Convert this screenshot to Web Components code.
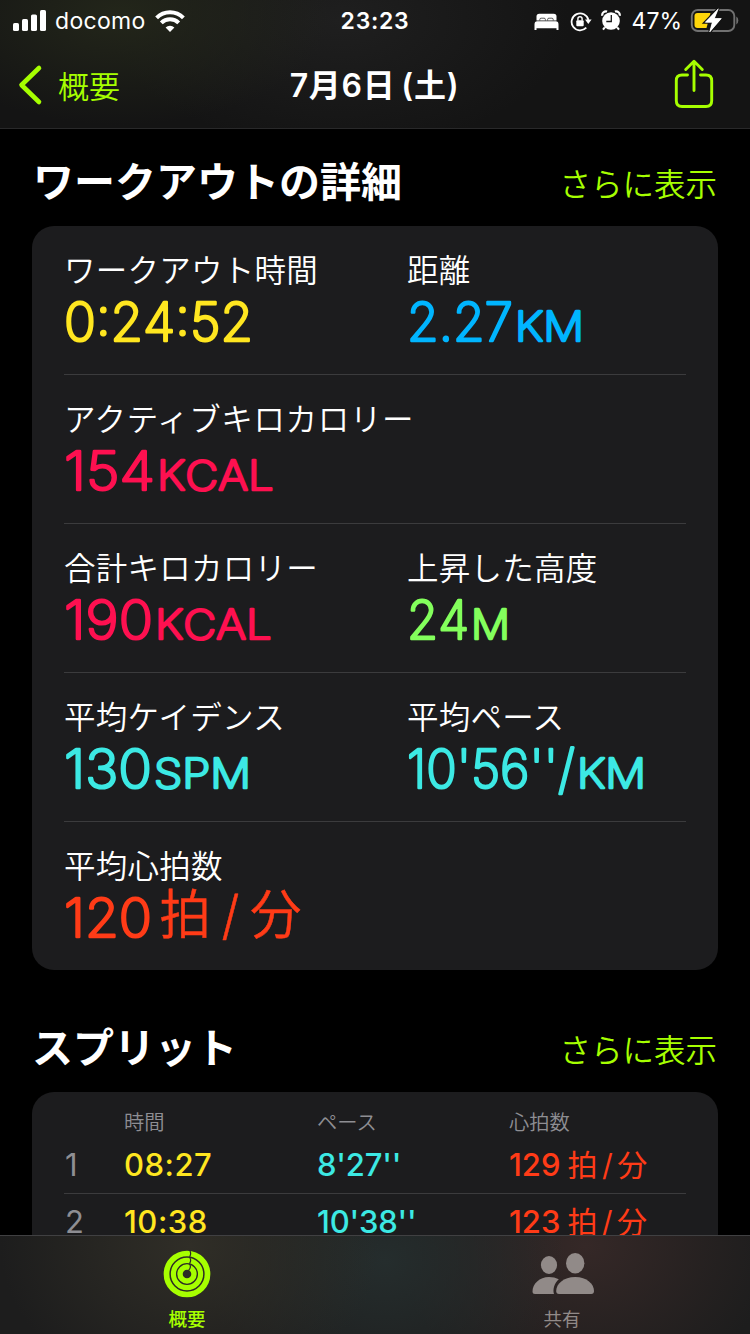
<!DOCTYPE html>
<html lang="ja">
<head>
<meta charset="UTF-8">
<title>7月6日(土)</title>
<style>
  html, body {
    margin: 0;
    background: #000;
  }
  body {
    width: 750px;
    height: 1334px;
    overflow: hidden;
    --accent: #a6ff00;
    --cjk: "Noto Sans CJK JP";
    color: #fff;
    font-family: Inter, "Noto Sans CJK JP", sans-serif;
    font-kerning: none;
  }
</style>
</head>
<body>
<workout-app>
  <status-bar slot="top" carrier="docomo" time="23:23" battery="47%"></status-bar>
  <nav-bar slot="top" back="概要"><span>7月6日</span><span style="margin-left:6px">(土)</span></nav-bar>

  <section-header more="さらに表示">ワークアウトの詳細</section-header>
  <detail-card>
    <metric-row>
      <metric-item label="ワークアウト時間" value="0:24:52" width="189" color="#ffe620"></metric-item>
      <metric-item label="距離" value="2.27" width="106" unit="KM" unit-width="69" color="#00b5ff"></metric-item>
    </metric-row>
    <metric-row>
      <metric-item label="アクティブキロカロリー" label-spacing="0.65" value="154" width="91" unit="KCAL" unit-width="116.5" color="#fe1050"></metric-item>
    </metric-row>
    <metric-row>
      <metric-item label="合計キロカロリー" value="190" width="89" unit="KCAL" unit-width="116.5" color="#fe1050"></metric-item>
      <metric-item label="上昇した高度" value="24" width="62" unit="M" unit-width="39" color="#83ff5c"></metric-item>
    </metric-row>
    <metric-row>
      <metric-item label="平均ケイデンス" value="130" width="88" unit="SPM" unit-width="97" color="#3ce9e4"></metric-item>
      <metric-item label="平均ペース" value="10'56''/" width="168" unit="KM" unit-width="69" color="#3ce9e4"></metric-item>
    </metric-row>
    <metric-row>
      <metric-item label="平均心拍数" value="120" width="88" suffix="拍 / 分" suffix-width="142" color="#ff3b17"></metric-item>
    </metric-row>
  </detail-card>

  <section-header class="second" more="さらに表示">スプリット</section-header>
  <splits-card>
    <split-row index="1" time="08:27" pace="8'27''" rate="129"></split-row>
    <split-row index="2" time="10:38" pace="10'38''" rate="123"></split-row>
  </splits-card>

  <tab-bar slot="bottom">
    <tab-item active label="概要">
      <svg width="48" height="48" viewBox="-24 -24 48 48" fill="none">
        <g stroke="#a6ff00">
          <circle r="20.5" stroke-width="5.7"/>
          <circle r="13.6" stroke-width="5.1"/>
          <circle r="7" stroke-width="5.4"/>
        </g>
        <g stroke="#2b2a26" stroke-width="1.2">
          <path d="M2.4-24q2.400 3.200.2 6.800"/>
          <path d="M2.400-17q2.400 3.200.2 6.400"/>
          <path d="M2.400-10.300q2.400 3.400-.8 6.600"/>
        </g>
      </svg>
    </tab-item>
    <tab-item label="共有">
      <svg width="64" height="48" viewBox="-1 0 64 48" fill="#918a88">
        <ellipse cx="18" cy="15" rx="8.1" ry="9"/>
        <ellipse cx="44.2" cy="13.2" rx="9.2" ry="10.2"/>
        <path d="M4 44q-2.500 0-2.500-2.500C1.500 34 8.500 27 18 27q5.500 0 9.800 2.200C23.500 33 21.500 39 23 44z"/>
        <path d="M28 44q-2.800 0-2.800-3C25.200 34 32.500 27 44.200 27S63 34 63 41q0 3-2.800 3z"/>
      </svg>
    </tab-item>
  </tab-bar>
</workout-app>

<script>
class WorkoutApp extends HTMLElement {
  constructor() {
    super();
    this.attachShadow({ mode: 'open' });
  }

  connectedCallback() {
    this.shadowRoot.innerHTML = `
      <style>
        :host {
          display: flex;
          flex-direction: column;
          height: 1334px;
        }
        header {
          box-sizing: border-box;
          height: 129px;
          flex: none;
          border-bottom: 1px solid #29292a;
          background:
            radial-gradient(ellipse 210px 110px at 120px 15px, #23261a, rgba(35, 38, 26, 0)),
            radial-gradient(ellipse 230px 130px at 340px 20px, #1f1f1f, rgba(31, 31, 31, 0)),
            #141414;
        }
        main {
          flex: 1;
          min-height: 0;
          overflow: hidden;
          padding: 0 32px;
        }
      </style>
      <header><slot name="top"></slot></header>
      <main><slot></slot></main>
      <slot name="bottom"></slot>
    `;
  }
}
customElements.define('workout-app', WorkoutApp);

class StatusBar extends HTMLElement {
  constructor() {
    super();
    this.attachShadow({ mode: 'open' });
  }

  connectedCallback() {
    this.shadowRoot.innerHTML = `
      <style>
        :host {
          display: grid;
          grid-template-columns: 1fr auto 1fr;
          align-items: center;
          height: 40px;
          padding: 0 11px 0 13px;
          font-size: 23px;
          line-height: 42px;
        }
        div {
          display: flex;
          align-items: center;
        }
        .right {
          justify-content: flex-end;
        }
        .carrier {
          margin: 0 9px 0 8px;
          letter-spacing: 0.3px;
        }
        .time {
          margin-left: -2px;
          font-weight: 600;
          letter-spacing: 0.7px;
        }
        .level {
          margin: 0 8px 0 11px;
        }
        svg {
          display: block;
        }
      </style>
      <div>
        <svg width="34" height="40" fill="#fff">
          <rect x="0" y="22" width="6" height="8" rx="1.6"/>
          <rect x="9" y="18" width="6" height="12" rx="1.6"/>
          <rect x="18" y="13.500" width="6" height="16.500" rx="1.6"/>
          <rect x="27" y="9" width="6" height="21" rx="1.6"/>
        </svg>
        <span class="carrier">${this.getAttribute('carrier')}</span>
        <svg width="30" height="40" fill="none" stroke="#fff" stroke-width="4">
          <path d="M1.600 16.800a19 19 0 0 1 26.800 0"/>
          <path d="M6.300 21.800a12.300 12.300 0 0 1 17.400 0"/>
          <path d="M15 31l-4.400-4.400a6.300 6.300 0 0 1 8.800 0z" fill="#fff" stroke="none"/>
        </svg>
      </div>
      <span class="time">${this.getAttribute('time')}</span>
      <div class="right">
        <svg width="25" height="40" fill="#fff">
          <path d="M2.500 19.500V15.600q0-2.800 2.800-2.800h14.400q2.800 0 2.800 2.800v3.900z"/>
          <path d="M5.800 19.500v-1q0-1.300 1.300-1.300h3q1.300 0 1.300 1.300v1M13.600 19.500v-1q0-1.300 1.300-1.300h3q1.300 0 1.300 1.300v1" fill="none" stroke="#151515" stroke-width="0.700"/>
          <path d="M.500 29v-5.500q0-3.300 2.700-3.300h18.600q2.700 0 2.700 3.300V29h-2v-1.700h-20V29z"/>
        </svg>
        <svg width="22" height="40" style="margin-left:11px" fill="none" stroke="#fff">
          <path d="M16.300 26.700A8.500 8.500 0 1 1 18.400 19" stroke-width="1.800"/>
          <path d="M15 18.600h6.600l-3.300 4.400z" fill="#fff" stroke="none"/>
          <rect x="6.300" y="19.300" width="7.400" height="6" rx="1" fill="#fff" stroke="none"/>
          <path d="M7.900 19.500v-1.700a2.100 2.100 0 0 1 4.200 0v1.700" stroke-width="1.400"/>
        </svg>
        <svg width="20" height="40" style="margin-left:9px">
          <circle cx="10" cy="20" r="8.800" fill="#fff"/>
          <path d="M1.300 14.700a3.700 3.700 0 0 1 4.800-4.200M18.700 14.700a3.700 3.700 0 0 0-4.800-4.200" stroke="#fff" stroke-width="2.200" fill="none"/>
          <path d="M3.800 26.300l-1.800 2.400M16.200 26.300l1.800 2.400" stroke="#fff" stroke-width="2"/>
          <path d="M10.300 14v6.500H5.300" stroke="#161616" stroke-width="1.300" fill="none"/>
        </svg>
        <span class="level">${this.getAttribute('battery')}</span>
        <svg width="49" height="40">
          <rect x="1.800" y="9" width="42.500" height="21" rx="6" fill="none" stroke="#717171" stroke-width="1.900"/>
          <path d="M46.300 15.500q2 1.200 2 4t-2 4z" fill="#717171"/>
          <path d="M7.500 12h13l-4 15h-9q-3 0-3-3v-9q0-3 3-3z" fill="#ffd60a"/>
          <path d="M28.300 7.800L15.300 21.300h7L19.700 31 31.300 17.500h-7z" fill="#fff" stroke="#141414" stroke-width="3" paint-order="stroke"/>
          <path d="M28.300 7.800L15.300 21.300h7L19.700 31 31.300 17.500h-7z" fill="#fff" stroke="#fff" stroke-width="0.600"/>
        </svg>
      </div>
    `;
  }
}
customElements.define('status-bar', StatusBar);

class NavBar extends HTMLElement {
  constructor() {
    super();
    this.attachShadow({ mode: 'open' });
  }

  connectedCallback() {
    this.shadowRoot.innerHTML = `
      <style>
        :host {
          display: grid;
          grid-template-columns: 1fr auto 1fr;
          align-items: center;
          height: 86px;
          padding: 0 36px;
        }
        .back {
          display: flex;
          align-items: center;
          gap: 15px;
          margin-left: -18px;
          color: var(--accent);
          font: 350 31px/84px var(--cjk), sans-serif;
        }
        .back span {
          padding-bottom: 1px;
        }
        .title {
          margin-left: -1px;
          padding-top: 2px;
          font-size: 32px;
          font-weight: 600;
          line-height: 88px;
          letter-spacing: 0.7px;
        }
        .share {
          justify-self: end;
        }
        svg {
          display: block;
          fill: none;
          stroke: var(--accent);
          stroke-linecap: round;
          stroke-linejoin: round;
        }
      </style>
      <div class="back">
        <svg width="25" height="42" stroke-width="4.600"><path d="M21 4L3.500 21 21 38"/></svg>
        <span>${this.getAttribute('back')}</span>
      </div>
      <div class="title"><slot></slot></div>
      <svg class="share" width="40" height="52" stroke-width="2.900">
        <path d="M13.500 16H8Q2.300 16 2.300 21.700v20.100q0 5.700 5.700 5.700h24q5.700 0 5.700-5.700V21.700q0-5.700-5.700-5.700H26.500"/>
        <path d="M20 31.500V3M11.700 10.500L20 2.300l8.300 8.200"/>
      </svg>
    `;
  }
}
customElements.define('nav-bar', NavBar);

class SectionHeader extends HTMLElement {
  constructor() {
    super();
    this.attachShadow({ mode: 'open' });
  }

  connectedCallback() {
    this.shadowRoot.innerHTML = `
      <style>
        :host {
          display: flex;
          justify-content: space-between;
          height: 97px;
          font-family: var(--cjk), sans-serif;
        }
        :host(.second) {
          height: 122px;
        }
        :host(.second) h2 {
          margin-left: 0;
          line-height: 151px;
        }
        :host(.second) a {
          line-height: 157px;
        }
        h2 {
          margin: 0 0 0 1px;
          font-size: 41px;
          font-weight: 700;
          line-height: 101px;
        }
        a {
          margin-right: 1px;
          color: var(--accent);
          font-size: 31.500px;
          font-weight: 350;
          line-height: 107px;
        }
      </style>
      <h2><slot></slot></h2>
      <a>${this.getAttribute('more')}</a>
    `;
  }
}
customElements.define('section-header', SectionHeader);

class DetailCard extends HTMLElement {
  constructor() {
    super();
    this.attachShadow({ mode: 'open' });
  }

  connectedCallback() {
    this.shadowRoot.innerHTML = `
      <style>
        :host {
          display: block;
          padding: 0 32px;
          border-radius: 22px;
          background: #1c1c1e;
        }
        ::slotted(metric-row:not(:last-child)) {
          border-bottom: 1px solid #3b3b3d;
        }
      </style>
      <slot></slot>
    `;
  }
}
customElements.define('detail-card', DetailCard);

class MetricRow extends HTMLElement {
  constructor() {
    super();
    this.attachShadow({ mode: 'open' });
  }

  connectedCallback() {
    this.shadowRoot.innerHTML = `
      <style>
        :host {
          display: grid;
          grid-template-columns: 343px 1fr;
          height: 148px;
        }
      </style>
      <slot></slot>
    `;
  }
}
customElements.define('metric-row', MetricRow);

// The value is a thin font with a round-joined stroke, which gives the soft stroke ends.
class MetricItem extends HTMLElement {
  constructor() {
    super();
    this.attachShadow({ mode: 'open' });
  }

  part(cls, text, x, y, width) {
    if (!text) return '';
    return `<text class="${cls}" x="${x}" y="${y}" textLength="${width}" lengthAdjust="spacingAndGlyphs">${text}</text>`;
  }

  connectedCallback() {
    const width = Number(this.getAttribute('width'));
    this.shadowRoot.innerHTML = `
      <style>
        :host {
          display: flex;
          flex-direction: column;
          gap: 6px;
          padding-top: 24px;
          white-space: nowrap;
        }
        .label {
          font: 350 31.500px/36px var(--cjk), sans-serif;
          letter-spacing: ${this.getAttribute('label-spacing') || 0.25}px;
        }
        svg {
          display: block;
          overflow: visible;
          fill: ${this.getAttribute('color')};
          stroke: ${this.getAttribute('color')};
          stroke-width: 2.600px;
          stroke-linejoin: round;
        }
        .value {
          font-size: 53.500px;
          font-weight: 250;
        }
        .unit {
          font-size: 40.500px;
          font-weight: 200;
        }
        .suffix {
          font: 350 53px Inter, var(--cjk), sans-serif;
          word-spacing: -4px;
          stroke-width: 0.5px;
        }
      </style>
      <div class="label">${this.getAttribute('label')}</div>
      <svg width="300" height="60">
        ${this.part('value', this.getAttribute('value'), 0, 49, width)}
        ${this.part('unit', this.getAttribute('unit'), width + 2, 49, this.getAttribute('unit-width'))}
        ${this.part('suffix', this.getAttribute('suffix'), width + 7.5, 46, this.getAttribute('suffix-width'))}
      </svg>
    `;
  }
}
customElements.define('metric-item', MetricItem);

class SplitsCard extends HTMLElement {
  constructor() {
    super();
    this.attachShadow({ mode: 'open' });
  }

  connectedCallback() {
    this.shadowRoot.innerHTML = `
      <style>
        :host {
          display: block;
          height: 300px;
          padding: 0 32px;
          border-radius: 22px;
          background: #1c1c1e;
        }
        .head {
          display: grid;
          grid-template-columns: 60px 193px 192px 1fr;
          box-sizing: border-box;
          height: 45px;
          padding-top: 14px;
          color: #8e8e93;
          font: 350 20.300px/30px var(--cjk), sans-serif;
        }
        ::slotted(split-row) {
          border-bottom: 1px solid #3b3b3d;
        }
      </style>
      <div class="head"><span></span><span>時間</span><span>ペース</span><span>心拍数</span></div>
      <slot></slot>
    `;
  }
}
customElements.define('splits-card', SplitsCard);

class SplitRow extends HTMLElement {
  constructor() {
    super();
    this.attachShadow({ mode: 'open' });
  }

  connectedCallback() {
    this.shadowRoot.innerHTML = `
      <style>
        :host {
          display: grid;
          grid-template-columns: 60px 193px 192px 1fr;
          height: 56px;
          font-size: 31px;
          font-weight: 500;
          line-height: 56px;
          white-space: nowrap;
        }
        .index {
          padding-left: 1px;
          color: #8e8e93;
          font-weight: 400;
        }
        .time {
          color: #ffe620;
          letter-spacing: 0.5px;
        }
        .pace {
          color: #3ce9e4;
          letter-spacing: -0.2px;
        }
        .rate {
          color: #ff3b17;
        }
        .unit {
          margin-left: 7px;
          font-size: 30px;
          font-weight: 400;
          line-height: 1;
          word-spacing: -4px;
        }
      </style>
      <span class="index">${this.getAttribute('index')}</span>
      <span class="time">${this.getAttribute('time')}</span>
      <span class="pace">${this.getAttribute('pace')}</span>
      <span class="rate">${this.getAttribute('rate')}<span class="unit">拍 / 分</span></span>
    `;
  }
}
customElements.define('split-row', SplitRow);

class TabBar extends HTMLElement {
  constructor() {
    super();
    this.attachShadow({ mode: 'open' });
  }

  connectedCallback() {
    this.shadowRoot.innerHTML = `
      <style>
        :host {
          display: grid;
          grid-template-columns: 1fr 1fr;
          box-sizing: border-box;
          flex: none;
          height: 99px;
          border-top: 1px solid #404042;
          background:
            radial-gradient(ellipse 190px 150px at 190px 10px, #302e27, rgba(48, 46, 39, 0)),
            radial-gradient(ellipse 180px 150px at 385px 25px, #252d2d, rgba(37, 45, 45, 0)),
            radial-gradient(ellipse 190px 150px at 585px 10px, #352827, rgba(53, 40, 39, 0)),
            #1d1d1d;
        }
      </style>
      <slot></slot>
    `;
  }
}
customElements.define('tab-bar', TabBar);

class TabItem extends HTMLElement {
  constructor() {
    super();
    this.attachShadow({ mode: 'open' });
  }

  connectedCallback() {
    this.shadowRoot.innerHTML = `
      <style>
        :host {
          display: flex;
          flex-direction: column;
          align-items: center;
          padding: 14px 1px 0 0;
          color: #918a88;
          font: 400 18.500px/28px var(--cjk), sans-serif;
        }
        :host([active]) {
          color: var(--accent);
          font-weight: 500;
        }
        span {
          margin-top: 6px;
        }
      </style>
      <slot></slot>
      <span>${this.getAttribute('label')}</span>
    `;
  }
}
customElements.define('tab-item', TabItem);
</script>
</body>
</html>
